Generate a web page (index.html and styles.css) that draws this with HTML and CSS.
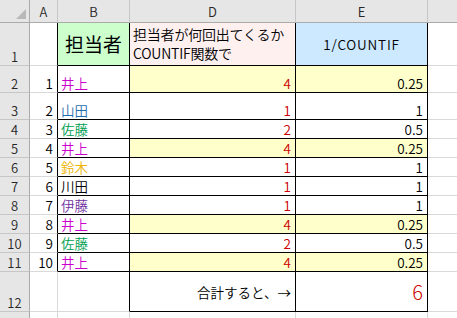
FILE: index.html
```html
<!DOCTYPE html>
<html lang="ja">
<head>
<meta charset="utf-8">
<title>COUNTIF</title>
<link rel="stylesheet" href="styles.css">
</head>
<body>
<div class="sheet">
  <!-- column headers -->
  <div class="ch corner"><span class="tri"></span></div>
  <div class="ch">A</div>
  <div class="ch">B</div>
  <div class="ch">D</div>
  <div class="ch">E</div>
  <div class="ch rest"></div>

  <!-- row 1 -->
  <div class="rh">1</div>
  <div class="c edge"></div>
  <div class="c tb green title">担当者</div>
  <div class="c tb pink wrap">担当者が何回出てくるか<br>COUNTIF関数で</div>
  <div class="c tb blue mid center wide">1/COUNTIF</div>
  <div class="c"></div>

  <!-- row 2 -->
  <div class="rh">2</div>
  <div class="c edge num">1</div>
  <div class="c tb inoue">井上</div>
  <div class="c tb yel num red">4</div>
  <div class="c tb yel num">0.25</div>
  <div class="c"></div>

  <!-- row 3 -->
  <div class="rh">3</div>
  <div class="c edge num">2</div>
  <div class="c tb yamada">山田</div>
  <div class="c tb num red">1</div>
  <div class="c tb num">1</div>
  <div class="c"></div>

  <!-- row 4 -->
  <div class="rh">4</div>
  <div class="c edge num">3</div>
  <div class="c tb sato">佐藤</div>
  <div class="c tb num red">2</div>
  <div class="c tb num">0.5</div>
  <div class="c"></div>

  <!-- row 5 -->
  <div class="rh">5</div>
  <div class="c edge num">4</div>
  <div class="c tb inoue">井上</div>
  <div class="c tb yel num red">4</div>
  <div class="c tb yel num">0.25</div>
  <div class="c"></div>

  <!-- row 6 -->
  <div class="rh">6</div>
  <div class="c edge num">5</div>
  <div class="c tb suzuki">鈴木</div>
  <div class="c tb num red">1</div>
  <div class="c tb num">1</div>
  <div class="c"></div>

  <!-- row 7 -->
  <div class="rh">7</div>
  <div class="c edge num">6</div>
  <div class="c tb">川田</div>
  <div class="c tb num red">1</div>
  <div class="c tb num">1</div>
  <div class="c"></div>

  <!-- row 8 -->
  <div class="rh">8</div>
  <div class="c edge num">7</div>
  <div class="c tb ito">伊藤</div>
  <div class="c tb num red">1</div>
  <div class="c tb num">1</div>
  <div class="c"></div>

  <!-- row 9 -->
  <div class="rh">9</div>
  <div class="c edge num">8</div>
  <div class="c tb inoue">井上</div>
  <div class="c tb yel num red">4</div>
  <div class="c tb yel num">0.25</div>
  <div class="c"></div>

  <!-- row 10 -->
  <div class="rh">10</div>
  <div class="c edge num">9</div>
  <div class="c tb sato">佐藤</div>
  <div class="c tb num red">2</div>
  <div class="c tb num">0.5</div>
  <div class="c"></div>

  <!-- row 11 -->
  <div class="rh">11</div>
  <div class="c edge num">10</div>
  <div class="c tb inoue">井上</div>
  <div class="c tb yel num red">4</div>
  <div class="c tb yel num">0.25</div>
  <div class="c"></div>

  <!-- row 12 -->
  <div class="rh">12</div>
  <div class="c"></div>
  <div class="c redge"></div>
  <div class="c tb num mid">合計すると、→</div>
  <div class="c tb num mid red big">6</div>
  <div class="c"></div>

  <!-- row 13 -->
  <div class="rh"></div>
  <div class="c"></div>
  <div class="c"></div>
  <div class="c"></div>
  <div class="c"></div>
  <div class="c"></div>
</div>
</body>
</html>
```

FILE: styles.css
```css
html, body {
  margin: 0;
  padding: 0;
  background: #ffffff;
}

body {
  width: 457px;
  height: 318px;
  overflow: hidden;
  font-family: "Noto Sans CJK JP", "Noto Sans", sans-serif;
  font-weight: 350;
  font-size: 13.5px;
  color: #000;
}

.sheet {
  display: grid;
  grid-template-columns: 30px 28px 72px 166px 132px 40px;
  grid-template-rows: 23px 43px 27px 27px 19px 19px 19px 19px 19px 19px 19px 19px 40px 20px;
}

.ch {
  background: #e6e6e6;
  border-right: 1px solid #c6c6c6;
  border-bottom: 1px solid #ababab;
  display: flex;
  align-items: center;
  justify-content: center;
  font-size: 13px;
  color: #262626;
  line-height: 15px;
  padding-top: 1px;
}

.ch.corner {
  position: relative;
  border-right-color: #ababab;
}

.tri {
  position: absolute;
  right: 3px;
  bottom: 3px;
  width: 0;
  height: 0;
  border-left: 10px solid transparent;
  border-bottom: 10px solid #b9b9b9;
}

.ch.rest {
  border-right: none;
}

.rh {
  background: #e6e6e6;
  border-right: 1px solid #ababab;
  border-bottom: 1px solid #c6c6c6;
  display: flex;
  align-items: flex-end;
  justify-content: center;
  font-size: 13px;
  color: #262626;
  line-height: 15px;
  padding-bottom: 1px;
}

.c {
  border-right: 1px solid #d9d9d9;
  border-bottom: 1px solid #d9d9d9;
  display: flex;
  align-items: flex-end;
  padding: 0 3px 1px 3px;
  line-height: 16px;
  white-space: nowrap;
}

.c.edge {
  border-right-color: #000;
  justify-content: flex-end;
}

.c.redge {
  border-right-color: #000;
}

.c.tb {
  border-right-color: #000;
  border-bottom-color: #000;
}

.num {
  justify-content: flex-end;
  padding-right: 4px;
}

.mid {
  align-items: center;
  padding-bottom: 0;
}

.center {
  justify-content: center;
}

.wide {
  letter-spacing: 0.8px;
}

.title {
  align-items: center;
  justify-content: center;
  font-size: 19px;
  font-weight: 400;
  line-height: 22px;
  padding-bottom: 0;
}

.wrap {
  white-space: normal;
  font-size: 14px;
  line-height: 19px;
  padding-bottom: 2px;
  letter-spacing: -0.2px;
}

.green { background: #ccffcc; }
.pink { background: #fff0f0; }
.blue { background: #cce9ff; }
.yel { background: #ffffcc; }

.red { color: #cc0000; }
.big { font-size: 20px; line-height: 22px; font-weight: 300; }

.inoue { color: #cc00cc; }
.yamada { color: #1f6fb0; }
.sato { color: #009e4f; }
.suzuki { color: #f0b400; }
.ito { color: #7030a0; }
```
